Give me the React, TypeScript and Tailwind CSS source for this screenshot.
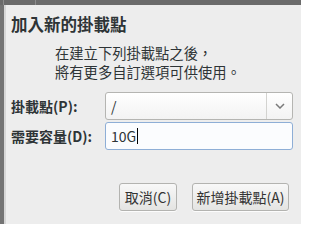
const FONT = "font-['Noto_Sans_CJK_TC','Noto_Sans',sans-serif]";

function Chevron() {
  return (
    <svg width="10" height="6" viewBox="0 0 10 6" fill="none">
      <path d="M1 1l4 4 4-4" stroke="#7a7a7a" strokeWidth="1.5" />
    </svg>
  );
}

export default function App() {
  return (
    <div className={`w-[301px] h-[224px] bg-[#ededed] overflow-hidden flex flex-col text-[#2e3436] ${FONT}`}>
      {/* window behind the dialog */}
      <div className="h-[5px] flex bg-[#6b6b6b]">
        <div className="w-[3px]" />
        <div className="w-px bg-[#8c8c8c]" />
        <div className="w-[31px]" />
        <div className="w-px bg-[#8c8c8c]" />
      </div>
      <div className="flex-1 flex">
        <div className="w-[4px] bg-[#747474]" />
        <div className="w-[2px] bg-[#d6d6d6]" />
        <div className="flex-1 pl-[5px] pr-[8px] pt-[9px] flex flex-col">
          <h1 className="text-[16.5px] leading-[20px] font-bold">加入新的掛載點</h1>
          <p className="mt-[9px] pl-[44px] text-[14.3px] leading-[19px]">
            在建立下列掛載點之後，
            <br />
            將有更多自訂選項可供使用。
          </p>
          <div className="mt-[11px] flex flex-col gap-[2px]">
            <div className="flex items-center">
              <label className="w-[94px] text-[14px] font-bold">掛載點(P):</label>
              <div className="flex-1 h-[28px] flex border border-[#b5b5b2] rounded-[3px] bg-gradient-to-b from-white to-[#f3f3f3]">
                <span className="flex-1 pl-[5px] text-[14px] leading-[26px]">/</span>
                <div className="w-[26px] border-l border-[#d3d3d0] flex items-center justify-center">
                  <Chevron />
                </div>
              </div>
            </div>
            <div className="flex items-center">
              <label className="w-[94px] text-[14px] font-bold">需要容量(D):</label>
              <div className="flex-1 h-[28px] flex items-center border border-[#8eaed6] rounded-[3px] bg-[#fbfcfe] pl-[5px]">
                <span className="text-[14px] leading-[26px]">10G</span>
                <span className="w-px h-[16px] bg-black ml-px" />
              </div>
            </div>
          </div>
          <div className="mt-[33px] mr-[4px] flex justify-end gap-[15px]">
            <button className="w-[58px] h-[28px] text-[14px] text-[#333] border border-[#b3b3b0] rounded-[3px] bg-gradient-to-b from-[#f8f8f8] to-[#e4e4e2] shadow-[0_1px_0_rgba(255,255,255,0.8)]">
              取消(C)
            </button>
            <button className="w-[97px] h-[28px] text-[14px] text-[#333] border border-[#b3b3b0] rounded-[3px] bg-gradient-to-b from-[#f8f8f8] to-[#e4e4e2] shadow-[0_1px_0_rgba(255,255,255,0.8)]">
              新增掛載點(A)
            </button>
          </div>
        </div>
      </div>
    </div>
  );
}
